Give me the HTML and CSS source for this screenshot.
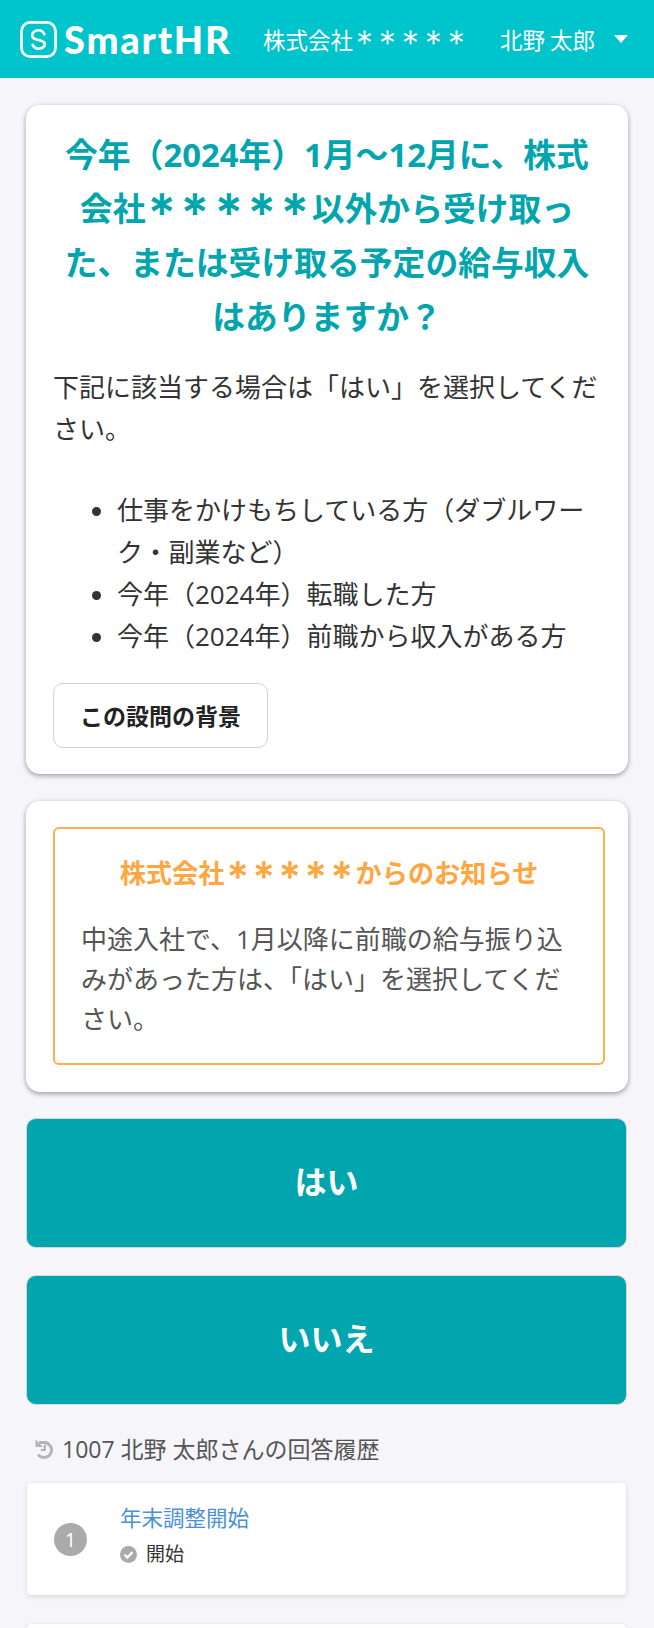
FILE: index.html
```html
<!DOCTYPE html>
<html lang="ja">
<head>
<meta charset="utf-8">
<title>SmartHR</title>
<link rel="stylesheet" href="styles.css">
</head>
<body>
<div class="page">
  <header class="topbar">
    <div class="logo">
      <svg class="logo-icon" viewBox="0 0 38 38" width="37" height="37" fill="none" stroke="#fff">
        <rect x="1.500" y="1.500" width="35" height="35" rx="9" stroke-width="2.800"/>
        <path d="M25 13.500C24 11 22 9.500 19 9.500C15.500 9.500 12.500 11.800 12.500 14.800C12.500 17 14.500 18.300 17 19L21 20C23.500 20.700 25.500 22 25.500 24C25.500 26.500 22.500 28.500 19 28.500C16 28.500 14 27 13 24.500" stroke-width="2.800" stroke-linecap="round"/>
      </svg>
      <span class="logo-text">SmartHR</span>
    </div>
    <span class="company">株式会社<span class="ast">＊＊＊＊＊</span></span>
    <span class="user">北野 太郎</span>
    <span class="caret"></span>
  </header>
  <main class="content">
    <section class="card question">
      <h1 class="q-title">今年（2024年）1月～12月に、株式会社<span class="ast">＊＊＊＊＊</span>以外から受け取った、または受け取る予定の給与収入はありますか？</h1>
      <p class="q-text">下記に該当する場合は「はい」を選択してください。</p>
      <ul class="q-list">
        <li>仕事をかけもちしている方（ダブルワーク・副業など）</li>
        <li>今年（2024年）転職した方</li>
        <li>今年（2024年）前職から収入がある方</li>
      </ul>
      <button class="bg-btn">この設問の背景</button>
    </section>
    <section class="card notice-card">
      <div class="notice">
        <h2 class="notice-title">株式会社<span class="ast">＊＊＊＊＊</span>からのお知らせ</h2>
        <p class="notice-text">中途入社で、1月以降に前職の給与振り込みがあった方は、「はい」を選択してください。</p>
      </div>
    </section>
    <button class="answer">はい</button>
    <button class="answer">いいえ</button>
    <div class="history-head">
      <svg class="history-icon" viewBox="0 0 20 20" width="20" height="20" fill="none" stroke="#b4b4b4" stroke-width="2.800">
        <path d="M5 3.500h5a7.500 7.500 0 1 1-6 12"/>
        <path d="M1.500 0.500l0 7.500h7.500z" fill="#b4b4b4" stroke="none"/>
        <path d="M10.800 6v5h-4" stroke-width="2.200"/>
      </svg>
      <span>1007 北野 太郎さんの回答履歴</span>
    </div>
    <article class="step">
      <span class="step-num">1</span>
      <div class="step-body">
        <a class="step-title">年末調整開始</a>
        <div class="step-answer">
          <svg viewBox="0 0 18 18" width="17" height="17"><circle cx="9" cy="9" r="9" fill="#aaa"/><path d="M4.800 9.200l3 3 5.400-5.700" fill="none" stroke="#fff" stroke-width="2.400"/></svg>
          <span>開始</span>
        </div>
      </div>
    </article>
    <article class="step"></article>
  </main>
</div>
</body>
</html>
```

FILE: styles.css
```css
* { box-sizing: border-box; }
html, body { margin: 0; padding: 0; }
body {
  background: #f5f5fa;
  color: #333;
  font-family: "Open Sans", "Noto Sans CJK JP", sans-serif;
}
.ast {
  font-family: "DejaVu Sans", sans-serif;
  font-size: 1.450em;
  letter-spacing: -.31em;
  line-height: 0;
  vertical-align: -.12em;
  margin-left: -.155em;
  margin-right: .155em;
}
.page { height: 1628px; overflow: hidden; }
.topbar {
  height: 78px;
  background: #00c4cc;
  color: #fff;
  display: flex;
  align-items: center;
  padding: 0 27px 0 20px;
}
.logo { display: flex; align-items: center; gap: 7px; width: 243px; flex: none; }
.logo-icon { flex: none; }
.logo-text {
  font-family: "Lato", sans-serif;
  font-weight: 900;
  font-size: 38px;
  line-height: 40px;
  letter-spacing: 1.800px;
}
.company { font-family: "Noto Sans CJK JP", sans-serif; font-size: 22.500px; flex: none; width: 237px; }
.user { font-family: "Noto Sans CJK JP", sans-serif; font-size: 22.500px; flex: none; width: 114px; white-space: nowrap; }
.caret {
  width: 0; height: 0; flex: none;
  border-left: 7px solid transparent;
  border-right: 7px solid transparent;
  border-top: 8px solid #fff;
}
.content { padding: 27px 26px 0; }
.card {
  background: #fff;
  border-radius: 14px;
  box-shadow: 0 2px 5px rgba(0,0,0,.32), 0 0 6px rgba(0,0,0,.06);
}
.question { height: 669px; padding: 23px 27px 0; }
.q-title {
  margin: 0;
  padding: 0 10px;
  text-align: center;
  color: #00a5ae;
  font-size: 32.800px;
  line-height: 54px;
  font-weight: 700;
}
.q-text { margin: 22px 0 0; font-size: 26px; line-height: 42px; }
.q-list { margin: 39px 0 0; padding: 0 0 0 64px; font-size: 26px; line-height: 42px; }
.bg-btn {
  display: block;
  margin-top: 26px;
  width: 215px;
  height: 65px;
  background: #fff;
  border: 1.500px solid #d6d3d0;
  border-radius: 10px;
  color: #222;
  font: 700 23px/1 "Noto Sans CJK JP", sans-serif;
}
.notice-card { height: 291px; margin-top: 27px; padding: 26px 23px 0 27px; }
.notice {
  height: 238px;
  border: 2px solid #ffad4f;
  border-radius: 6px;
  padding: 26px 26px 0;
}
.notice-title {
  margin: 0;
  text-align: center;
  color: #ffa640;
  font-size: 26.200px;
  line-height: 36px;
  font-weight: 700;
}
.notice-text { margin: 28px 0 0; color: #555; font-size: 26px; line-height: 40px; }
.answer {
  display: block;
  width: 601px;
  height: 130px;
  margin-top: 26px;
  padding-bottom: 8px;
  background: #00a5ae;
  border: 1.500px solid #d9d5d2;
  border-radius: 10px;
  color: #fff;
  font: 700 32px/1 "Noto Sans CJK JP", sans-serif;
}
.answer + .answer { margin-top: 27px; }
.history-head {
  display: flex;
  align-items: center;
  gap: 8px;
  margin-top: 25px;
  padding-left: 8px;
  color: #555;
  font-size: 23px;
  line-height: 38px;
}
.history-icon { flex: none; }
.step {
  display: flex;
  align-items: center;
  height: 112px;
  margin: 15px 2px 0 1px;
  background: #fff;
  border-radius: 4px;
  padding-left: 27px;
  box-shadow: 0 2px 5px rgba(0,0,0,.1), 0 0 2px rgba(0,0,0,.08);
}
.step + .step { margin-top: 29px; }
.step-num {
  width: 33px; height: 33px; flex: none;
  border-radius: 50%;
  background: #aaa;
  color: #fff;
  font-size: 20px;
  line-height: 33px;
  text-align: center;
}
.step-body { margin-left: 33px; padding-bottom: 7px; }
.step-title { display: block; color: #4a90d9; font-size: 21.500px; line-height: 30px; }
.step-answer {
  display: flex;
  align-items: center;
  gap: 9px;
  margin-top: 7px;
  color: #333;
  font-size: 19px;
  line-height: 28px;
}
```
